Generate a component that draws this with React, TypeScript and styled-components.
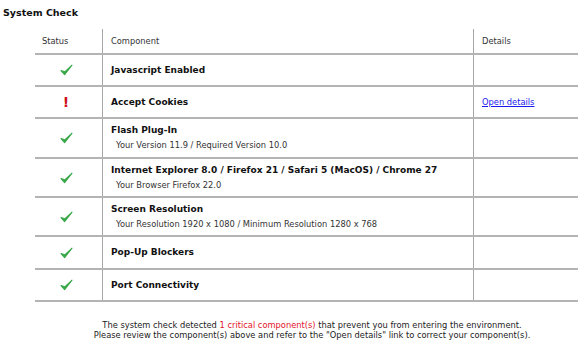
import React from 'react';
import styled, { createGlobalStyle } from 'styled-components';

type Status = 'ok' | 'error';

interface ICheckItem {
	title: string;
	detail?: string;
	status: Status;
	link?: string;
	height: number;
}

const checks: ICheckItem[] = [
	{ title: 'Javascript Enabled', status: 'ok', height: 32 },
	{ title: 'Accept Cookies', status: 'error', link: 'Open details', height: 32 },
	{ title: 'Flash Plug-In', detail: 'Your Version 11.9 / Required Version 10.0', status: 'ok', height: 40 },
	{
		title: 'Internet Explorer 8.0 / Firefox 21 / Safari 5 (MacOS) / Chrome 27',
		detail: 'Your Browser Firefox 22.0',
		status: 'ok',
		height: 39,
	},
	{
		title: 'Screen Resolution',
		detail: 'Your Resolution 1920 x 1080 / Minimum Resolution 1280 x 768',
		status: 'ok',
		height: 39,
	},
	{ title: 'Pop-Up Blockers', status: 'ok', height: 33 },
	{ title: 'Port Connectivity', status: 'ok', height: 32 },
];

const CheckIcon = () => (
	<svg width='13' height='12' viewBox='0 0 13 12'>
		<path d='M1 6.6 L4.6 10.6 L12 1.2 L4.8 7.8 Z' fill='#3aa84a' stroke='#3aa84a' strokeWidth='1.1' strokeLinejoin='round' />
	</svg>
);

export default function App() {
	return (
		<>
			<GlobalStyle />
			<Page>
				<Title>System Check</Title>
				<Table>
					<Row $height={26} $header>
						<StatusCell $header>Status</StatusCell>
						<ComponentCell>Component</ComponentCell>
						<DetailsCell>Details</DetailsCell>
					</Row>
					{checks.map((check) => (
						<Row key={check.title} $height={check.height}>
							<StatusCell>
								{check.status === 'ok' ? <CheckIcon /> : <Bang>!</Bang>}
							</StatusCell>
							<ComponentCell>
								<ItemTitle>{check.title}</ItemTitle>
								{check.detail && <ItemDetail>{check.detail}</ItemDetail>}
							</ComponentCell>
							<DetailsCell>
								{check.link && <DetailsLink href='#'>{check.link}</DetailsLink>}
							</DetailsCell>
						</Row>
					))}
				</Table>
				<Summary>
					<p>
						The system check detected <Critical>1 critical component(s)</Critical> that prevent you from entering the environment.
					</p>
					<p>Please review the component(s) above and refer to the "Open details" link to correct your component(s).</p>
				</Summary>
			</Page>
		</>
	);
}

const GlobalStyle = createGlobalStyle`
  html, body {
    margin: 0;
    padding: 0;
    background: #ffffff;
  }
  body {
    font-family: "DejaVu Sans", Verdana, sans-serif;
    color: #111;
  }
`;

const Page = styled.div`
  width: 579px;
  height: 347px;
  overflow: hidden;
  padding-top: 6px;
  box-sizing: border-box;
`;

const Title = styled.h1`
  margin: 0 0 0 3px;
  font-size: 9.5px;
  font-weight: bold;
  line-height: 14px;
  color: #111;
`;

const Table = styled.div`
  margin: 9px 1px 0 35px;
  display: flex;
  flex-direction: column;
`;

const Row = styled.div<{ $height: number; $header?: boolean }>`
  display: grid;
  grid-template-columns: 67px 371px 1fr;
  height: ${(p) => p.$height}px;
  border-bottom: 2px solid #b4b4b4;
  box-sizing: border-box;
  font-size: ${(p) => (p.$header ? '8.3px' : '9px')};
  color: ${(p) => (p.$header ? '#333' : '#111')};
`;

const StatusCell = styled.div<{ $header?: boolean }>`
  display: flex;
  align-items: center;
  justify-content: ${(p) => (p.$header ? 'flex-start' : 'center')};
  padding: ${(p) => (p.$header ? '0 0 0 7px' : '0 5px 0 0')};
`;

const ComponentCell = styled.div`
  border-left: 1px solid #a8a8a8;
  display: flex;
  flex-direction: column;
  justify-content: center;
  padding-left: 8px;
`;

const DetailsCell = styled.div`
  border-left: 1px solid #a8a8a8;
  display: flex;
  align-items: center;
  padding-left: 8px;
`;

const ItemTitle = styled.div`
  font-weight: bold;
  font-size: 9px;
  line-height: 15px;
`;

const ItemDetail = styled.div`
  font-size: 8.3px;
  line-height: 15px;
  padding-left: 5px;
  color: #333;
`;

const Bang = styled.span`
  color: #d0101a;
  font-weight: bold;
  font-size: 14px;
  line-height: 1;
`;

const DetailsLink = styled.a`
  color: #1a1aee;
  text-decoration: underline;
  font-size: 8.3px;
`;

const Summary = styled.div`
  margin-top: 18px;
  text-align: center;
  font-size: 8.3px;
  line-height: 10px;
  color: #222;
  padding-left: 45px;
  p {
    margin: 0;
  }
`;

const Critical = styled.span`
  color: #e2132b;
`;
